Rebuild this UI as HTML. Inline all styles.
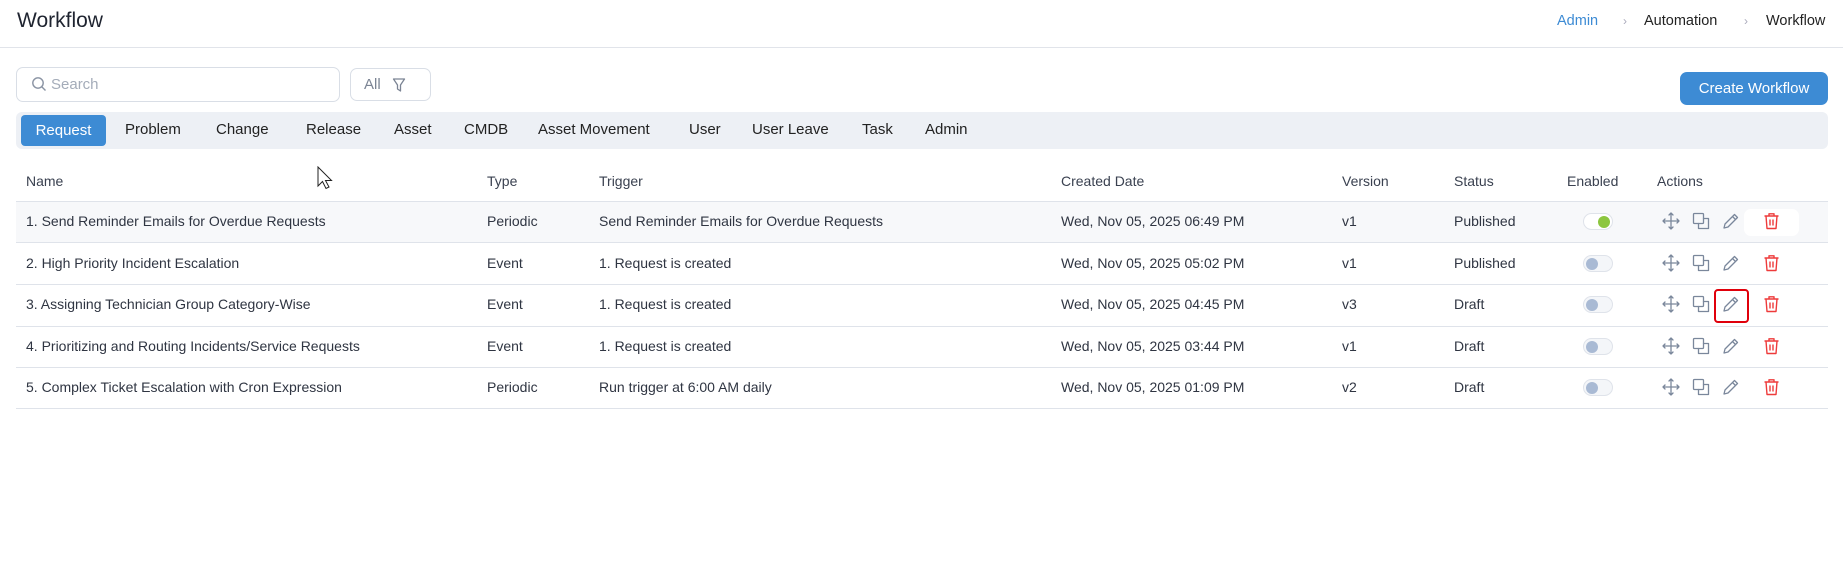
<!DOCTYPE html>
<html><head><meta charset="utf-8"><style>
*{box-sizing:border-box;margin:0;padding:0}
body{width:1843px;height:562px;background:#fff;font-family:"Liberation Sans",sans-serif;color:#2f3542;position:relative;overflow:hidden}
.a{position:absolute;white-space:nowrap}
.title{left:17px;top:9px;font-size:21px;color:#1f2430}
.hdr{left:0;top:47px;width:1843px;height:1px;background:#e1e4ea}
.bc{top:13px;font-size:14.5px;color:#222}
.sep{top:14px;font-size:12px;color:#aab}
.search{left:16px;top:67px;width:324px;height:35px;border:1px solid #d9dee6;border-radius:7px}
.filter{left:350px;top:68px;width:81px;height:33px;border:1px solid #d9dee6;border-radius:7px}
.btn{left:1680px;top:72px;width:148px;height:33px;background:#3d8bd4;border-radius:7px;color:#fff;font-size:15px;text-align:center;line-height:33px}
.tabs{left:16px;top:112px;width:1812px;height:37px;background:#edf0f5;border-radius:6px}
.pill{left:21px;top:115px;width:85px;height:31px;background:#3d8bd4;border-radius:4px;color:#fff;font-size:15px;text-align:center;line-height:31px}
.tab{top:121px;font-size:15px;color:#222}
.th{top:173px;font-size:14px;color:#3a4150}
.line{left:16px;width:1812px;height:1px;background:#dfe3ea}
.td{font-size:14px;color:#2f3542}
.tg{width:30px;height:17px;border-radius:9px;border:1px solid #dfe3ea;background:#fff}
.k{position:absolute;top:2px;width:12px;height:12px;border-radius:50%}
svg.i{position:absolute}
</style></head><body>
<div class="a title">Workflow</div>
<div class="a hdr"></div>
<div class="a bc" style="left:1557px;color:#3d8bd4">Admin</div>
<div class="a sep" style="left:1623px">›</div>
<div class="a bc" style="left:1644px">Automation</div>
<div class="a sep" style="left:1744px">›</div>
<div class="a bc" style="left:1766px">Workflow</div>

<div class="a search"></div>
<svg class="i" style="left:31px;top:76px" width="16" height="16" viewBox="0 0 16 16"><circle cx="7" cy="7" r="5.2" fill="none" stroke="#8a93a3" stroke-width="1.4"/><path d="M11 11l3.5 3.5" stroke="#8a93a3" stroke-width="1.4"/></svg>
<div class="a" style="left:51px;top:76px;font-size:15px;color:#a4acb9">Search</div>
<div class="a filter"></div>
<div class="a" style="left:364px;top:76px;font-size:15px;color:#7b8494">All</div>
<svg class="i" style="left:392px;top:77px" width="14" height="16" viewBox="0 0 14 16"><path d="M1.5 2h11L8.5 8v6L5.5 12V8z" fill="none" stroke="#7b8494" stroke-width="1.3" stroke-linejoin="round"/></svg>
<div class="a btn">Create Workflow</div>

<div class="a tabs"></div>
<div class="a pill">Request</div>
<div class="a tab" style="left:125px">Problem</div>
<div class="a tab" style="left:216px">Change</div>
<div class="a tab" style="left:306px">Release</div>
<div class="a tab" style="left:394px">Asset</div>
<div class="a tab" style="left:464px">CMDB</div>
<div class="a tab" style="left:538px">Asset Movement</div>
<div class="a tab" style="left:689px">User</div>
<div class="a tab" style="left:752px">User Leave</div>
<div class="a tab" style="left:862px">Task</div>
<div class="a tab" style="left:925px">Admin</div>

<svg class="i" style="left:317px;top:166px" width="20" height="26" viewBox="0 0 20 26"><path d="M1 1v19l4.5-4.5 3.5 7 3-1.5-3.5-6.5h6z" fill="#fff" stroke="#222" stroke-width="1"/></svg>

<div class="a th" style="left:26px">Name</div>
<div class="a th" style="left:487px">Type</div>
<div class="a th" style="left:599px">Trigger</div>
<div class="a th" style="left:1061px">Created Date</div>
<div class="a th" style="left:1342px">Version</div>
<div class="a th" style="left:1454px">Status</div>
<div class="a th" style="left:1567px">Enabled</div>
<div class="a th" style="left:1657px">Actions</div>

<div class="a" style="left:16px;top:202px;width:1812px;height:40px;background:#f7f8fa"></div>
<div class="a" style="left:1744px;top:209px;width:55px;height:27px;background:#fff;border-radius:7px"></div>
<div class="a line" style="top:201px"></div>
<div class="a line" style="top:242px"></div>
<div class="a line" style="top:284px"></div>
<div class="a line" style="top:326px"></div>
<div class="a line" style="top:367px"></div>
<div class="a line" style="top:408px"></div>

<div id="rows"></div>
<script>
var R=[["1. Send Reminder Emails for Overdue Requests","Periodic","Send Reminder Emails for Overdue Requests","Wed, Nov 05, 2025 06:49 PM","v1","Published",1],
["2. High Priority Incident Escalation","Event","1. Request is created","Wed, Nov 05, 2025 05:02 PM","v1","Published",0],
["3. Assigning Technician Group Category-Wise","Event","1. Request is created","Wed, Nov 05, 2025 04:45 PM","v3","Draft",0],
["4. Prioritizing and Routing Incidents/Service Requests","Event","1. Request is created","Wed, Nov 05, 2025 03:44 PM","v1","Draft",0],
["5. Complex Ticket Escalation with Cron Expression","Periodic","Run trigger at 6:00 AM daily","Wed, Nov 05, 2025 01:09 PM","v2","Draft",0]];
var X=[26,487,599,1061,1342,1454],h="";
R.forEach(function(r,i){var c=221+i*41.5,t=c-8;
for(var j=0;j<6;j++)h+='<div class="a td" style="left:'+X[j]+'px;top:'+t+'px">'+r[j]+'</div>';
h+='<div class="a tg" style="left:1583px;top:'+(c-8)+'px;'+(r[6]?'':'background:#f4f6f9')+'"><div class="k" style="'+(r[6]?'right:2px;background:#8cc63f':'left:2px;background:#a9bad4')+'"></div></div>';
var s='stroke="#7a879b" stroke-width="1.3" fill="none" stroke-linecap="round" stroke-linejoin="round"';
h+='<svg class="i" style="left:1662px;top:'+(c-9)+'px" width="18" height="18" viewBox="0 0 18 18"><path d="M9 1v16M1 9h16M7 3l2-2 2 2M7 15l2 2 2-2M3 7L1 9l2 2M15 7l2 2-2 2" '+s+'/></svg>';
h+='<svg class="i" style="left:1692px;top:'+(c-9)+'px" width="18" height="18" viewBox="0 0 18 18"><rect x="1.5" y="1.5" width="10" height="10" rx="1" '+s+'/><path d="M11.5 6.5h5v10h-10v-5" '+s+'/></svg>';
h+='<svg class="i" style="left:1722px;top:'+(c-9)+'px" width="18" height="18" viewBox="0 0 18 18"><path d="M2 16l1-4L12.5 2.5l3 3L6 15z M10.5 4.5l3 3" '+s+'/></svg>';
h+='<svg class="i" style="left:1763px;top:'+(c-9)+'px" width="17" height="18" viewBox="0 0 17 18"><path d="M1.5 4h14M6 4V1.8h5V4M3 4l1 12.5h9L14 4M7 7.5v6M10 7.5v6" stroke="#ee3b3b" stroke-width="1.4" fill="none" stroke-linejoin="round"/></svg>';
});
h+='<div class="a" style="left:1714px;top:289px;width:35px;height:34px;border:2px solid #e0000b;border-radius:4px"></div>';
document.getElementById("rows").innerHTML=h;
</script>
</body></html>
